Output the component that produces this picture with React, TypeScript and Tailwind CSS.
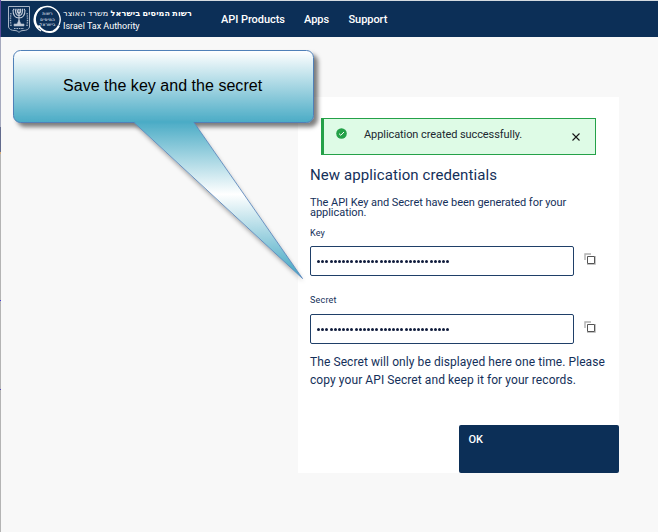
import React from 'react';

function Emblem() {
  return (
    <svg width="24" height="29" viewBox="0 0 24 29" fill="none" stroke="#a9b6c7">
      <path d="M1.5 1.5H22.5V22Q21.5 25.5 16 25.5Q13 25.5 12 27.5Q11 25.5 8 25.5Q2.5 25.5 1.5 22Z" strokeWidth="1" />
      <path d="M6 5Q6 13 12 13Q18 13 18 5M8.5 5Q8.5 10.5 12 10.5Q15.5 10.5 15.5 5M10.3 5Q10.3 8.5 12 8.5Q13.7 8.5 13.7 5M12 4V18" stroke="#c3ccd9" strokeWidth="1.1" />
      <path d="M6 4.5H18" stroke="#c3ccd9" strokeWidth="1.4" strokeDasharray="1.4 .8" />
      <path d="M12 15L14 19H17V21H7V19H10Z" fill="#c3ccd9" strokeWidth=".6" />
      <path d="M4 21Q3 14 4 8M20 21Q21 14 20 8" strokeWidth="1.4" strokeDasharray="1.3 1" />
      <path d="M7 23.5H17" strokeWidth="1.2" strokeDasharray="1.6 .8" />
    </svg>
  );
}

function TaxSeal() {
  return (
    <svg width="29" height="29" viewBox="0 0 29 29" direction="rtl">
      <path d="M8 26A13 13 0 1 1 26 20" stroke="#fff" strokeWidth="1.4" fill="none" />
      <path d="M9 2.6A13 13 0 0 0 5.5 23" stroke="#fff" strokeWidth="1.9" fill="none" />
      <path d="M5.5 20.5Q11 29 20 26.5Q24 25 26 20.5" stroke="#fff" strokeWidth="2" fill="none" />
      <g fill="#a9b8cb" fontFamily="'Noto Sans', 'DejaVu Sans', sans-serif" fontSize="4.4" textAnchor="middle" fontWeight="600">
        <text x="14.5" y="10.2">רשות</text>
        <text x="14.5" y="15.8">המיסים</text>
        <text x="14.5" y="21.4">בישראל</text>
      </g>
    </svg>
  );
}

function CopyIcon() {
  return (
    <svg width="12" height="12" viewBox="0 0 12 12" fill="none" className="mb-1 ml-[10px]">
      <path d="M1 7V1H7" stroke="#b0b0b0" strokeWidth="1.4" />
      <path d="M11.5 3V11.5H3" stroke="#c4c4c4" />
      <path d="M3.5 3.5H10.5V10.5H3.5Z" stroke="#555" />
    </svg>
  );
}

function SecretField() {
  return (
    <div className="flex h-[30px] items-center">
      <div className="flex h-[30px] w-[264px] items-center gap-[1.18px] rounded-xs border border-[#1f3f68] pl-[6px]">
        {Array.from({ length: 32 }, (_, i) => (
          <span key={i} className="size-[3px] shrink-0 rounded-full bg-[#101c3c]" />
        ))}
      </div>
      <CopyIcon />
    </div>
  );
}

function Callout() {
  return (
    <div className="absolute left-0 top-0">
      <svg width="340" height="310" viewBox="0 0 340 310">
        <defs>
          <linearGradient id="box" x1="0" y1="51" x2="0" y2="122" gradientUnits="userSpaceOnUse">
            <stop offset="0" stopColor="#fff" />
            <stop offset="1" stopColor="#4bacc6" />
          </linearGradient>
          <linearGradient id="tail" x1="0" y1="122" x2="0" y2="279" gradientUnits="userSpaceOnUse">
            <stop offset="0" stopColor="#4bacc6" />
            <stop offset=".46" stopColor="#fff" />
            <stop offset="1" stopColor="#3ba4c1" />
          </linearGradient>
          <filter id="shadow" x="-10%" y="-10%" width="125%" height="125%">
            <feDropShadow dx="4" dy="4" stdDeviation="2" floodColor="#000" floodOpacity=".5" />
          </filter>
          <filter id="tailShadow" x="-10%" y="-10%" width="125%" height="125%">
            <feDropShadow dx="1" dy="3" stdDeviation="2" floodColor="#000" floodOpacity=".35" />
          </filter>
        </defs>
        <rect x="13.5" y="50.5" width="300" height="72" rx="7" fill="url(#box)" stroke="#5080b8" filter="url(#shadow)" />
        <path d="M134 122.5L302.5 278.5L194 122.5Z" fill="url(#tail)" filter="url(#tailShadow)" />
        <path d="M134 122.5L302.5 278.5L194 122.5" fill="none" stroke="#5f89bd" strokeWidth=".9" />
        <path d="M134.5 121H193.5V123.2H135.5Z" fill="#4bacc6" />
      </svg>
      <div className="absolute left-[63px] top-[76px] whitespace-nowrap font-['Liberation_Sans',sans-serif] text-[16px] leading-[19px] tracking-[0.03px] text-black">
        Save the key and the secret
      </div>
    </div>
  );
}

export default function App() {
  return (
    <div className="relative flex h-[532px] w-[658px] overflow-hidden bg-[#f8f8f8] font-[Roboto,sans-serif] text-[#14305a]">
      <div className="flex w-px shrink-0 flex-col bg-[#b4b4b4]">
        <div className="h-[37px] bg-[#5b4a9c]" />
        <div className="h-[90px] bg-[#a5a9bd]" />
        <div className="h-[25px] bg-[#626b8d]" />
        <div className="h-[2px] bg-[#d6ad79]" />
        <div className="mt-[146px] h-px bg-[#4238d8]" />
        <div className="mt-[88px] h-px bg-[#5748b9]" />
      </div>
      <div className="flex flex-1 flex-col">
        <header className="flex h-[37px] border-t border-[#d5dbe0] bg-[#0c2f57] pl-1.5 text-white">
          <div className="flex gap-[2px] pt-1">
            <Emblem />
            <TaxSeal />
          </div>
          <div className="flex w-[159px] flex-col whitespace-nowrap pt-[5px]">
            <div dir="rtl" className="w-[130px] font-['Noto_Sans','DejaVu_Sans',sans-serif] text-[8px] leading-[14px] tracking-[0.13px]">
              <b>רשות המיסים בישראל</b> משרד האוצר
            </div>
            <div className="pl-px text-[9px] leading-[12px]">Israel Tax Authority</div>
          </div>
          <nav className="flex whitespace-nowrap pt-[11px] text-[11px] font-medium leading-4 tracking-[-0.06px]">
            <span className="w-[83px]">API Products</span>
            <span className="w-[44.5px]">Apps</span>
            <span>Support</span>
          </nav>
        </header>
        <main className="ml-[297px] mt-[60px] flex h-[376px] w-[321px] flex-col whitespace-nowrap bg-white pl-3">
          <div className="ml-[11px] mt-[21px] flex h-[37px] w-[275px] border border-l-[3px] border-[#24a148] bg-[#defbe6] text-[#202830]">
            <svg width="11" height="11" viewBox="0 0 11 11" className="ml-3 mt-[9px]">
              <circle cx="5.5" cy="5.5" r="5.3" fill="#24a148" />
              <path d="M3 5.6L4.8 7.3L8 4" fill="none" stroke="#fff" strokeWidth="1" />
            </svg>
            <span className="ml-[17px] mt-2 w-[207.5px] text-[11px] leading-4 tracking-[-0.08px]">Application created successfully.</span>
            <svg width="8" height="8" viewBox="0 0 8 8" className="mt-[14px]">
              <path d="M.5 .5L7.5 7.5M7.5 .5L.5 7.5" stroke="#161616" strokeWidth="1.1" />
            </svg>
          </div>
          <h1 className="mt-[9px] text-[15px] leading-[22px] tracking-[0.09px]">New application credentials</h1>
          <p className="mt-[12px] text-[11px] leading-[10px] tracking-[-0.04px]">
            The API Key and Secret have been generated for your
            <br />
            application.
          </p>
          <label className="mt-[9px] text-[9px] leading-[12px] tracking-[0.1px]">Key</label>
          <div className="mt-[7px]"><SecretField /></div>
          <label className="mt-[18px] text-[9px] leading-[12px] tracking-[0.2px]">Secret</label>
          <div className="mt-[8px]"><SecretField /></div>
          <p className="mt-[9px] text-[12px] leading-[18px] tracking-[0.08px]">
            The Secret will only be displayed here one time. Please
            <br />
            copy your API Secret and keep it for your records.
          </p>
          <button className="ml-[149px] mt-auto h-12 w-[160px] rounded-xs bg-[#0c2f57] pb-[17px] pl-[9.5px] text-left text-[11px] font-medium text-white">
            OK
          </button>
        </main>
      </div>
      <Callout />
    </div>
  );
}
